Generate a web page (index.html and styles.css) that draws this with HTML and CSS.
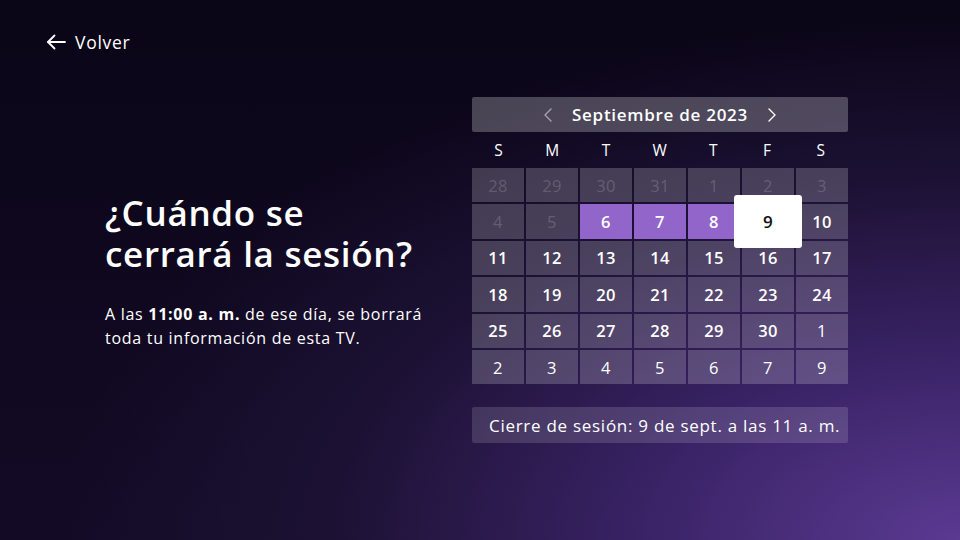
FILE: index.html
```html
<!DOCTYPE html>
<html lang="es">
<head>
    <meta charset="UTF-8">
    <meta name="viewport" content="width=device-width, initial-scale=1.0">
    <title>Cierre de sesión</title>
    <link rel="stylesheet" href="styles.css">
</head>
<body>
  <div class="screen">
    <header class="top">
        <a class="back" href="#">
            <svg width="20" height="16" viewBox="0 0 20 16" fill="none" stroke="#fff" stroke-width="1.8" stroke-linecap="round" stroke-linejoin="round">
                <path d="M19 8H2"/>
                <path d="M8.5 1.5L2 8l6.5 6.5"/>
            </svg>
            <span>Volver</span>
        </a>
    </header>
    <main class="content">
        <section class="intro">
            <h1>¿Cuándo se cerrará la sesión?</h1>
            <p>A las <b>11:00 a. m.</b> de ese día, se borrará toda tu información de esta TV.</p>
        </section>
        <section class="picker">
            <div class="month">
                <svg class="chev dim" width="8" height="14" viewBox="0 0 8 14" fill="none" stroke="#fff" stroke-width="1.4" stroke-linecap="round" stroke-linejoin="round">
                    <path d="M7 1L1 7l6 6"/>
                </svg>
                <span class="month-name">Septiembre de 2023</span>
                <svg class="chev" width="8" height="14" viewBox="0 0 8 14" fill="none" stroke="#fff" stroke-width="1.4" stroke-linecap="round" stroke-linejoin="round">
                    <path d="M1 1l6 6-6 6"/>
                </svg>
            </div>
            <div class="weekdays">
                <span>S</span><span>M</span><span>T</span><span>W</span><span>T</span><span>F</span><span>S</span>
            </div>
            <div class="days" id="days"></div>
            <div class="summary">Cierre de sesión: 9 de sept. a las 11 a. m.</div>
        </section>
    </main>
  </div>
    <script>
        // 6 semanas, desde el 28 de agosto
        const days = document.getElementById("days");
        const cells = [28, 29, 30, 31, 1, 2, 3, 4, 5, 6, 7, 8, 9, 10];
        for (let d = 11; d <= 30; d++) cells.push(d);
        cells.push(1, 2, 3, 4, 5, 6, 7, 9);

        cells.forEach(function (n, i) {
            const cell = document.createElement("div");
            cell.className = "day";
            cell.textContent = n;
            if (i < 9) cell.classList.add("past");
            else if (i < 12) cell.classList.add("range");
            else if (i === 12) cell.classList.add("selected");
            else if (i >= 34) cell.classList.add("next");
            days.appendChild(cell);
        });
    </script>
</body>
</html>
```

FILE: styles.css
```css
body {
    margin: 0;
    padding: 0;
    font-family: "Open Sans", Lato, sans-serif;
    color: #fff;
    letter-spacing: 0.045em;
}
.screen {
    width: 960px;
    height: 540px;
    overflow: hidden;
    background-color: #0b0618;
    background-image:
        radial-gradient(ellipse 900px 520px at 100% 100%, #5b3a92 0%, #3a2366 35%, #1c1133 70%, rgba(11,6,24,0) 100%),
        linear-gradient(180deg, #0a0517 0%, #130b26 100%);
}
.top {
    padding: 30px 0 0 46px;
    height: 26px;
}
.back {
    display: inline-flex;
    align-items: center;
    gap: 9px;
    color: #fff;
    text-decoration: none;
    font-size: 17.5px;
}
.content {
    display: flex;
    justify-content: space-between;
    padding: 41px 112px 0 105px;
}
.intro {
    width: 340px;
    padding-top: 95px;
}
.intro h1 {
    margin: 0;
    max-width: 335px;
    font-size: 35px;
    font-weight: 600;
    line-height: 41px;
    letter-spacing: 0.02em;
}
.intro p {
    margin: 28px 0 0;
    font-size: 16px;
    line-height: 24px;
}
.intro b {
    font-weight: 700;
}
.picker {
    width: 376px;
}
.month {
    height: 35px;
    display: flex;
    align-items: center;
    justify-content: center;
    gap: 20px;
    background-color: rgba(255,255,255,0.25);
    border-radius: 2px;
    font-size: 17px;
    font-weight: 600;
}
.chev.dim {
    opacity: 0.5;
}
.weekdays {
    display: grid;
    grid-template-columns: repeat(7, 1fr);
    height: 36px;
    align-items: center;
    text-align: center;
    font-size: 15.5px;
}
.days {
    display: grid;
    grid-template-columns: repeat(7, 1fr);
    grid-auto-rows: 34.4px;
    gap: 2px;
}
.day {
    display: flex;
    align-items: center;
    justify-content: center;
    background-color: rgba(255,255,255,0.2);
    font-size: 16.5px;
    font-weight: 600;
    letter-spacing: 0.02em;
}
.day.past {
    color: rgba(255,255,255,0.18);
    font-weight: 400;
}
.day.next {
    font-weight: 400;
}
.day.range {
    background-color: #9165c9;
}
.day.selected {
    position: relative;
    z-index: 1;
    margin: -9px -8px;
    background-color: #fff;
    color: #111;
    border-radius: 3px;
    font-size: 17px;
}
.summary {
    margin-top: 23px;
    height: 36px;
    display: flex;
    align-items: center;
    padding-left: 17px;
    background-color: rgba(255,255,255,0.14);
    border-radius: 2px;
    font-size: 17px;
}
```
